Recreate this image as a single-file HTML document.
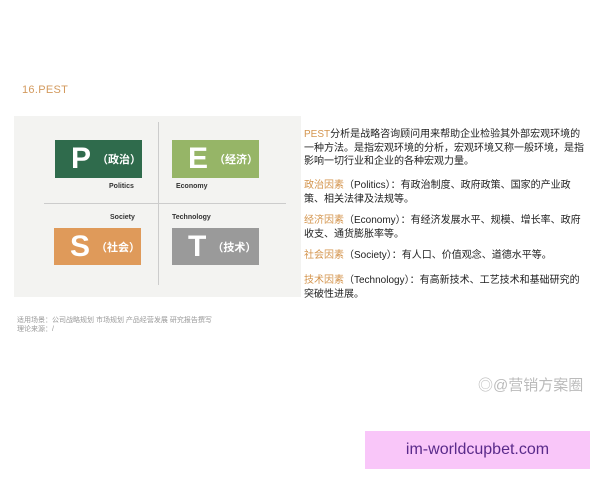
<!DOCTYPE html>
<html><head><meta charset="utf-8"><style>
body{margin:0;width:600px;height:480px;background:#fff;position:relative;overflow:hidden;font-family:"Liberation Sans","Noto Sans CJK SC",sans-serif}
.a{position:absolute;white-space:nowrap}
.box{position:absolute;color:#fff;display:flex;align-items:center}
.box b{font-size:30px;font-weight:900;margin-left:16px;margin-right:6px}
.box span{font-size:11px;font-weight:bold}
.lbl{position:absolute;font-size:7px;font-weight:bold;color:#333}
.t{position:absolute;left:304px;font-size:10px;line-height:13.5px;color:#222;width:281px}
.o{color:#d4954e}
</style></head><body>
<div class="a" style="left:22px;top:84px;font-size:11px;color:#d39a5e;letter-spacing:0.3px">16.PEST</div>
<div class="a" style="left:14px;top:116px;width:287px;height:181px;background:#f3f3f1"></div>
<div class="a" style="left:158px;top:122px;width:1px;height:163px;background:#ccc"></div>
<div class="a" style="left:44px;top:203px;width:242px;height:1px;background:#ccc"></div>
<div class="box" style="left:55px;top:140px;width:87px;height:38px;background:#2f6b4c"><b>P</b><span>（政治）</span></div>
<div class="box" style="left:172px;top:140px;width:87px;height:38px;background:#96b567"><b>E</b><span>（经济）</span></div>
<div class="box" style="left:54px;top:228px;width:87px;height:37px;background:#df9a5a"><b>S</b><span>（社会）</span></div>
<div class="box" style="left:172px;top:228px;width:87px;height:37px;background:#9a9a9a"><b>T</b><span>（技术）</span></div>
<div class="lbl" style="left:109px;top:183px">Politics</div>
<div class="lbl" style="left:176px;top:183px">Economy</div>
<div class="lbl" style="left:110px;top:214px">Society</div>
<div class="lbl" style="left:172px;top:214px">Technology</div>
<div class="t" style="top:128px"><span class="o">PEST</span>分析是战略咨询顾问用来帮助企业检验其外部宏观环境的一种方法。是指宏观环境的分析，宏观环境又称一般环境，是指影响一切行业和企业的各种宏观力量。</div>
<div class="t" style="top:179px"><span class="o">政治因素</span>（Politics）：有政治制度、政府政策、国家的产业政策、相关法律及法规等。</div>
<div class="t" style="top:214px"><span class="o">经济因素</span>（Economy）：有经济发展水平、规模、增长率、政府收支、通货膨胀率等。</div>
<div class="t" style="top:249px"><span class="o">社会因素</span>（Society）：有人口、价值观念、道德水平等。</div>
<div class="t" style="top:274px"><span class="o">技术因素</span>（Technology）：有高新技术、工艺技术和基础研究的突破性进展。</div>
<div class="a" style="left:17px;top:316px;font-size:7px;color:#999;line-height:9px">适用场景：公司战略规划 市场规划 产品经营发展 研究报告撰写<br>理论来源：/</div>
<div class="a" style="left:478px;top:374px;font-size:15px;color:#bbb">◎@营销方案圈</div>
<div class="a" style="left:365px;top:431px;width:225px;height:38px;background:#f9c6f9;color:#5a2a8a;font-size:16px;text-align:center;line-height:38px">im-worldcupbet.com</div>
</body></html>
